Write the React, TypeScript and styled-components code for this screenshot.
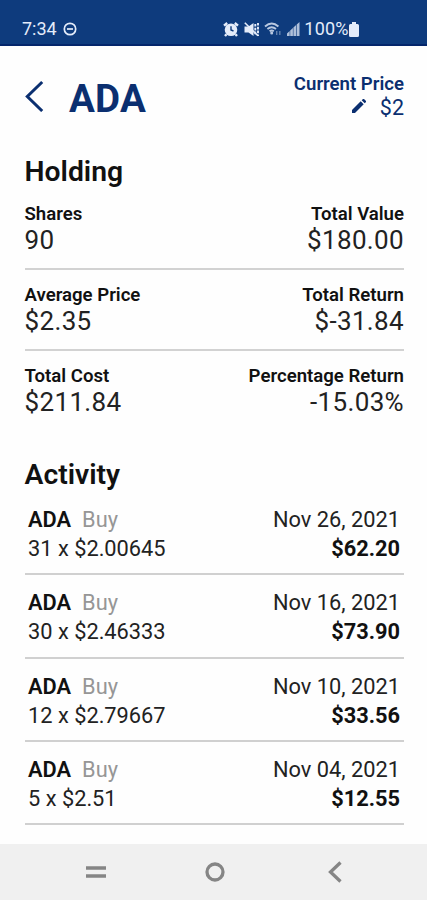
import React from "react";
import styled, { createGlobalStyle } from "styled-components";

const GlobalStyle = createGlobalStyle`
  *, *::before, *::after { box-sizing: border-box; }
  body { margin: 0; background: #fff; }
  h1, h2, dl, dt, dd, ul, p { margin: 0; padding: 0; }
  button { padding: 0; border: 0; background: none; color: inherit; }
`;

const Screen = styled.div`
  display: flex;
  flex-direction: column;
  width: 427px;
  height: 900px;
  overflow: hidden;
  background: #fefefe;
  color: #111;
  font-family: Roboto, "Liberation Sans", sans-serif;
`;

const StatusBar = styled.header`
  display: flex;
  align-items: flex-start;
  justify-content: space-between;
  height: 46px;
  padding: 18px 68px 0 22px;
  border-bottom: 2px solid #04266b;
  background: #0e3b7d;
  color: #e4ecfa;
  font-size: 18px;
  line-height: 22px;
`;

const StatusGroup = styled.div<{ $gap: number }>`
  display: flex;
  align-items: center;
  height: 22px;
  gap: ${(p) => p.$gap}px;
`;

const StatusText = styled.span<{ $tracking?: number }>`
  letter-spacing: ${(p) => p.$tracking ?? 0}px;
`;

const Content = styled.main`
  flex: 1;
  display: flex;
  flex-direction: column;
  padding: 0 23px 0 24.5px;
`;

const TitleBar = styled.div`
  display: flex;
  justify-content: space-between;
  height: 106px;
  color: #0b2f70;
`;

const TitleGroup = styled.div`
  display: flex;
  padding-top: 30px;
  gap: 23.5px;
`;

const BackButton = styled.button`
  display: flex;
  width: 21px;
  height: 44px;
  padding-top: 4px;
`;

const Title = styled.h1`
  font-size: 38.5px;
  line-height: 45px;
  font-weight: 700;
  letter-spacing: 0.2px;
`;

const PriceBlock = styled.div`
  display: flex;
  flex-direction: column;
  align-items: flex-end;
  padding-top: 26px;
`;

const Label = styled.dt`
  font-size: 18.6px;
  line-height: 24px;
  font-weight: 600;
  white-space: nowrap;
`;

const PriceRow = styled.dd`
  display: flex;
  align-items: center;
  gap: 14px;
  font-size: 21.5px;
  line-height: 24px;

  svg { margin-bottom: 4px; }
`;

const SectionTitle = styled.h2`
  font-size: 28.3px;
  line-height: 40px;
  font-weight: 600;
`;

const Holdings = styled.dl`
  margin-top: -3px;
  margin-bottom: 23px;
`;

const HoldingRow = styled.div`
  display: flex;
  justify-content: space-between;
  height: 81px;
  padding-top: 13px;
  border-bottom: 2px solid #d2d2d2;

  &:last-child { border-bottom-color: transparent; }
`;

const Stat = styled.div<{ $end?: boolean }>`
  text-align: ${(p) => (p.$end ? "right" : "left")};
`;

const Value = styled.dd`
  font-size: 26px;
  line-height: 28px;
  letter-spacing: 0.35px;
  color: #222;
`;

const Activities = styled.ul`
  margin-top: -3px;
  list-style: none;
`;

const Activity = styled.li`
  display: grid;
  grid-template-columns: 1fr auto;
  grid-template-rows: 29px 29px;
  height: 83.3px;
  padding: 13px 4px 0 3.5px;
  border-bottom: 2px solid #d0d0d0;
  font-size: 21.8px;
  line-height: 29px;
`;

const Cell = styled.p<{ $end?: boolean; $bold?: boolean }>`
  text-align: ${(p) => (p.$end ? "right" : "left")};
  font-weight: ${(p) => (p.$bold ? 700 : 400)};
  color: ${(p) => (p.$bold ? "#111" : "#222")};
`;

const Ticker = styled.span`
  margin-right: 11px;
  color: #111;
  font-weight: 600;
`;

const Kind = styled.span`
  color: #969696;
`;

const NavBar = styled.nav`
  display: grid;
  grid-template-columns: 20px 20px 20px;
  column-gap: 99.3px;
  align-items: center;
  height: 56px;
  padding-left: 86px;
  background: #f0f0f0;
  color: #858585;
`;

const NavButton = styled.button`
  display: flex;
  justify-content: center;
`;

const holdings = [
  [["Shares", "90"], ["Total Value", "$180.00"]],
  [["Average Price", "$2.35"], ["Total Return", "$-31.84"]],
  [["Total Cost", "$211.84"], ["Percentage Return", "-15.03%"]],
];

const activities = [
  { trade: "31 x $2.00645", date: "Nov 26, 2021", total: "$62.20" },
  { trade: "30 x $2.46333", date: "Nov 16, 2021", total: "$73.90" },
  { trade: "12 x $2.79667", date: "Nov 10, 2021", total: "$33.56" },
  { trade: "5 x $2.51", date: "Nov 04, 2021", total: "$12.55" },
];

const DoNotDisturb = () => (
  <svg width="14" height="14" viewBox="0 0 14 14" fill="none" stroke="currentColor" strokeWidth="1.7">
    <circle cx="7" cy="7" r="5.7" />
    <path d="M4 7h6" />
  </svg>
);

const Alarm = () => (
  <svg width="16" height="15" viewBox="0 0 16 15">
    <path d="M1 3.7 4.2 1M15 3.7 11.8 1M3.5 12.2 2 14M12.5 12.2 14 14" stroke="currentColor" strokeWidth="2.4" />
    <circle cx="8" cy="7.7" r="6.3" fill="currentColor" />
    <path d="M8 4.3v3.7l2.5 1" fill="none" stroke="#0e3b7d" strokeWidth="1.4" />
  </svg>
);

const Muted = () => (
  <svg width="16" height="15" viewBox="0 0 16 15" fill="none" stroke="currentColor">
    <path d="M.5 4.5h4L9.5 1v13L4.5 10.5h-4z" fill="currentColor" stroke="none" />
    <path d="M.8 .8 14 13.8" strokeWidth="1.6" />
    <path d="M11.3 2v11M14 1v13" strokeWidth="1.9" strokeDasharray="2.6 1.2" />
  </svg>
);

const Wifi = () => (
  <svg width="18" height="14" viewBox="0 0 18 14" fill="none" stroke="currentColor" opacity=".8">
    <path d="M1 4.5q6.7-6 13.4 0M3.4 7q4.3-3.5 8.6 0M5.6 9.3q2.1-1.6 4.2 0" strokeWidth="1.9" />
    <circle cx="7.7" cy="11" r="1.5" fill="currentColor" stroke="none" />
    <path d="M12.7 9v4M15.8 9v4" strokeWidth="1.4" opacity=".5" />
  </svg>
);

const Signal = () => (
  <svg width="13" height="14" viewBox="0 0 13 14" fill="currentColor" opacity=".75">
    <path d="M0 11.5 2.7 9v5H0zM3.2 8.5 5.9 6v8H3.2zM6.4 5.5 9.1 3v11H6.4zM9.7 2.5 12.5 0v14H9.7z" />
  </svg>
);

const Battery = () => (
  <svg width="10" height="15" viewBox="0 0 10 15" fill="currentColor">
    <path d="M3 0h4v2h1.5Q10 2 10 3.5v10Q10 15 8.5 15h-7Q0 15 0 13.5v-10Q0 2 1.5 2H3z" />
  </svg>
);

const Pencil = () => (
  <svg width="14" height="14" viewBox="0 0 14 14" fill="currentColor">
    <path d="M0 14v-3L8.7 2.3l3 3L3 14zM9.7 1.3 11 0q.5-.3 1 0l2 2q.3.5 0 1l-1.3 1.3z" />
  </svg>
);

const Chevron = () => (
  <svg width="20" height="32" viewBox="0 0 20 32" fill="none" stroke="currentColor" strokeWidth="3">
    <path d="M17.2 2 2.3 16.5 17.2 31" />
  </svg>
);

export default function App() {
  return (
    <Screen>
      <GlobalStyle />
      <StatusBar>
        <StatusGroup $gap={6.5}>
          <StatusText>7:34</StatusText>
          <DoNotDisturb />
        </StatusGroup>
        <StatusGroup $gap={4.6}>
          <Alarm />
          <Muted />
          <Wifi />
          <Signal />
          <StatusGroup $gap={0.5}>
            <StatusText $tracking={0.15}>100%</StatusText>
            <Battery />
          </StatusGroup>
        </StatusGroup>
      </StatusBar>

      <Content>
        <TitleBar>
          <TitleGroup>
            <BackButton aria-label="Back"><Chevron /></BackButton>
            <Title>ADA</Title>
          </TitleGroup>
          <PriceBlock as="dl">
            <Label>Current Price</Label>
            <PriceRow><Pencil />$2</PriceRow>
          </PriceBlock>
        </TitleBar>

        <SectionTitle>Holding</SectionTitle>
        <Holdings>
          {holdings.map((row) => (
            <HoldingRow key={row[0][0]}>
              {row.map(([label, value], i) => (
                <Stat key={label} $end={i === 1}>
                  <Label>{label}</Label>
                  <Value>{value}</Value>
                </Stat>
              ))}
            </HoldingRow>
          ))}
        </Holdings>

        <SectionTitle>Activity</SectionTitle>
        <Activities>
          {activities.map(({ trade, date, total }) => (
            <Activity key={date}>
              <Cell><Ticker>ADA</Ticker><Kind>Buy</Kind></Cell>
              <Cell $end>{date}</Cell>
              <Cell>{trade}</Cell>
              <Cell $end $bold>{total}</Cell>
            </Activity>
          ))}
        </Activities>
      </Content>

      <NavBar>
        <NavButton aria-label="Recent apps">
          <svg width="20" height="14" viewBox="0 0 20 14" stroke="currentColor" strokeWidth="3.4">
            <path d="M0 3h20M0 11h20" />
          </svg>
        </NavButton>
        <NavButton aria-label="Home">
          <svg width="20" height="20" viewBox="0 0 20 20" fill="none" stroke="currentColor" strokeWidth="3.3">
            <circle cx="10" cy="10" r="8" />
          </svg>
        </NavButton>
        <NavButton aria-label="Back">
          <svg width="14" height="22" viewBox="0 0 14 22" fill="none" stroke="currentColor" strokeWidth="3.3">
            <path d="M12.5 1.5 2.5 11 12.5 20.5" />
          </svg>
        </NavButton>
      </NavBar>
    </Screen>
  );
}
